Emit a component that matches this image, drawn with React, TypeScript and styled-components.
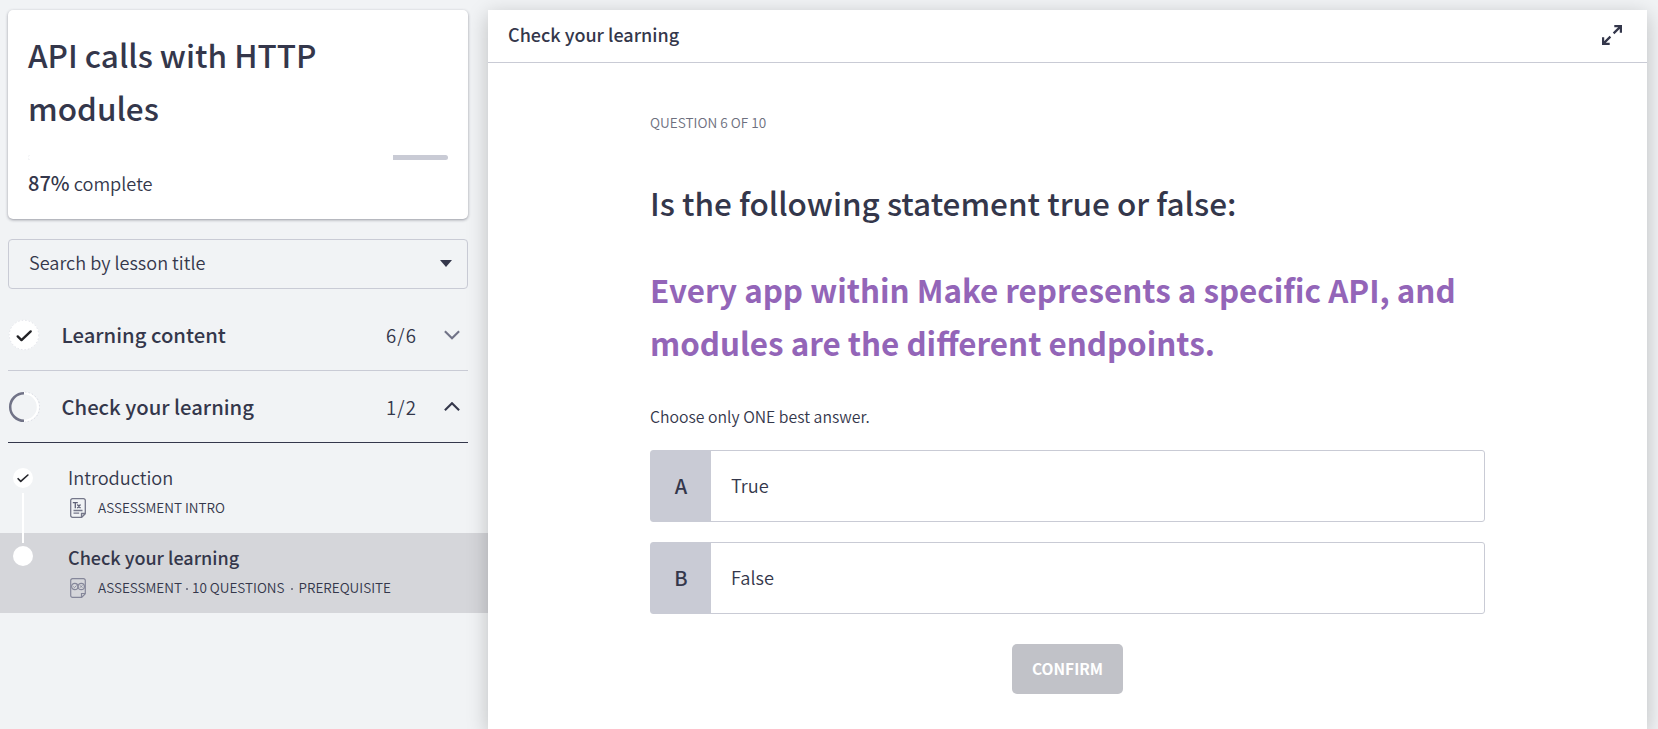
import React from "react";
import styled, { createGlobalStyle } from "styled-components";

const ink = "#34374b";
const line = "#c9cbd5";

const GlobalStyle = createGlobalStyle`
  *, *::before, *::after { box-sizing: border-box; }
  body {
    margin: 0;
    background: #f1f3f5;
    color: ${ink};
    font-family: "Noto Sans CJK SC", "Noto Sans", sans-serif;
    font-size: 18.2px;
    font-weight: 350;
    overflow: hidden;
  }
  h1, h2, p, ul { margin: 0; padding: 0; font-weight: inherit; }
  button { font-family: inherit; font-weight: inherit; color: inherit; border: 0; cursor: pointer; }
`;

const Page = styled.div`
  display: flex;
  height: 100vh;
  padding: 10px 11px 0 0;
`;

const Sidebar = styled.aside`
  width: 488px;
  flex: none;
`;

const CourseCard = styled.section`
  height: 209px;
  margin: 0 20px 20px 8px;
  padding: 18px 20px 20px;
  background: #fff;
  border-radius: 5px;
  box-shadow: 0 1px 3px rgba(40, 42, 60, 0.45);
`;

const CourseTitle = styled.h1`
  font-size: 31.5px;
  font-weight: 500;
  line-height: 53px;
`;

const ProgressTrack = styled.div`
  display: flex;
  width: 420px;
  height: 5px;
  margin-top: 21px;
  border-radius: 3px;
  background: ${line};
  overflow: hidden;
`;

const ProgressFill = styled.div`
  background: #fff;
`;

const ProgressText = styled.p`
  margin-top: 7px;
  line-height: 32px;

  strong {
    font-size: 20px;
    font-weight: 500;
  }
`;

const SearchBox = styled.button`
  display: flex;
  align-items: center;
  justify-content: space-between;
  width: 460px;
  height: 50px;
  margin: 0 0 10px 8px;
  padding: 0 15px 1px 20px;
  background: transparent;
  border: 1px solid ${line};
  border-radius: 4px;
  font-size: 18.1px;
`;

const SearchLabel = styled.span`
  padding-bottom: 4px;
`;

const SectionRow = styled.div<{ $open?: boolean }>`
  display: flex;
  align-items: center;
  height: 72px;
  margin: 0 20px 0 8px;
  border-bottom: 1px solid ${(p) => (p.$open ? ink : line)};
`;

const SectionTitle = styled.h2`
  flex: 1;
  margin-left: 21.5px;
  font-size: 20.25px;
  font-weight: 500;
  line-height: 30px;
`;

const SectionCount = styled.span`
  width: 58px;
  font-size: 18.6px;
  letter-spacing: 1.1px;
`;

const ChevronSlot = styled.span`
  display: flex;
  width: 16px;
  margin: 1px 8px 0 0;
`;

const LessonList = styled.ul`
  list-style: none;
  padding-top: 10px;
`;

const Lesson = styled.li<{ $active?: boolean }>`
  position: relative;
  display: flex;
  height: 80px;
  background: ${(p) => (p.$active ? "#d5d6da" : "transparent")};
`;

const LessonMarker = styled.span<{ $active?: boolean }>`
  display: flex;
  align-items: center;
  justify-content: center;
  flex: none;
  width: 20px;
  height: 20px;
  margin: ${(p) => (p.$active ? "13px" : "15px")} 0 0 13px;
  border-radius: 50%;
  background: #fff;
`;

const Connector = styled.span`
  position: absolute;
  z-index: 1;
  left: 22px;
  top: 40px;
  width: 2px;
  height: 50px;
  background: #fff;
`;

const LessonBody = styled.div`
  margin-left: 35px;
  padding-top: 10px;
`;

const LessonTitle = styled.p<{ $active?: boolean }>`
  font-weight: ${(p) => (p.$active ? 500 : 350)};
  font-size: ${(p) => (p.$active ? 18 : 18.2)}px;
  line-height: 28px;
`;

const LessonMeta = styled.p`
  display: flex;
  align-items: center;
  height: 20px;
  margin-top: 6px;
  padding-left: 2px;
  font-size: 13.5px;
  line-height: 20px;
  white-space: pre;

  svg { margin: 1px 12px 0 0; flex: none; }
`;

const Dot = styled.span<{ $wide?: boolean }>`
  width: 2px;
  height: 2px;
  margin: 3px ${(p) => (p.$wide ? 6 : 4)}px 0;
  border-radius: 1px;
  background: #5d5f73;
`;

const Panel = styled.main`
  position: relative;
  z-index: 2;
  flex: 1;
  background: #fff;
  box-shadow: 0 5px 20px rgba(0, 0, 0, 0.22);
`;

const PanelHeader = styled.header`
  display: flex;
  align-items: center;
  justify-content: space-between;
  height: 53px;
  padding: 0 25px 3px 20px;
  border-bottom: 1px solid ${line};
  font-size: 18px;
  font-weight: 500;
`;

const PanelTitle = styled.span`
  padding-bottom: 2px;
`;

const Question = styled.section`
  display: flex;
  flex-direction: column;
  width: 835px;
  margin: 0 auto;
  padding-top: 49px;
`;

const QuestionCount = styled.p`
  font-size: 13.6px;
  line-height: 20px;
  color: #6d6f7e;
`;

const QuestionText = styled.h1`
  margin-top: 44px;
  font-size: 31.5px;
  font-weight: 500;
  line-height: 53px;
`;

const Statement = styled.p`
  margin-top: 34px;
  font-size: 31.35px;
  font-weight: 700;
  line-height: 53px;
  color: #9365b8;
`;

const Hint = styled.p`
  margin-top: 34px;
  font-size: 15.8px;
  line-height: 28px;
`;

const Option = styled.button`
  display: flex;
  height: 72px;
  margin-top: 19px;
  padding: 0;
  background: #fff;
  border: 1px solid ${line};
  border-radius: 3px;
  font-size: 18.2px;

  & + & { margin-top: 20px; }
`;

const OptionKey = styled.span`
  display: flex;
  align-items: center;
  justify-content: center;
  width: 60px;
  height: 100%;
  padding-bottom: 1px;
  background: ${line};
  font-size: 20px;
  font-weight: 500;
`;

const OptionLabel = styled.span`
  padding-left: 20px;
  line-height: 69px;
`;

const ConfirmButton = styled.button`
  width: 111px;
  height: 50px;
  margin-top: 30px;
  align-self: center;
  padding: 0 0 2px;
  background: #c1c2c8;
  border-radius: 5px;
  color: #fff;
  font-size: 15.5px;
  font-weight: 700;
`;

const CheckIcon = ({ size }: { size: number }) => (
  <svg width={size} height={size} viewBox="0 0 16 16" fill="none">
    <path d="M1.5 9 5 12.6 14.5 4" stroke="#26262c" strokeWidth="2.2" strokeLinecap="round" strokeLinejoin="round" />
  </svg>
);

const DoneBadge = () => (
  <svg width="32" height="32" viewBox="0 0 32 32" fill="none">
    <circle cx="16" cy="16" r="15" fill="#fff" />
    <circle cx="16" cy="16" r="14.7" stroke="#c9cbd6" strokeWidth=".5" strokeDasharray="1.5 2" />
    <path d="M9.7 17.4 13.5 21.1 22.7 12.4" stroke="#222226" strokeWidth="2.4" strokeLinecap="round" strokeLinejoin="round" />
  </svg>
);

const HalfBadge = () => (
  <svg width="32" height="32" viewBox="0 0 32 32" fill="none">
    <path d="M16 2.1a13.9 13.9 0 0 1 0 27.8" stroke="#fff" strokeWidth="2.2" />
    <path d="M17 1.2a14.8 14.8 0 0 1 0 29.6" stroke="#c9cbd6" strokeWidth=".6" strokeDasharray="1.5 2" />
    <path d="M16 2.2a13.8 13.8 0 0 0 0 27.6" stroke="#717387" strokeWidth="2.5" />
  </svg>
);

const Chevron = ({ up }: { up?: boolean }) => (
  <svg width="16" height="10" viewBox="0 0 16 10" fill="none">
    <path d={up ? "M.9 8.3 8 1.2l7.1 7.1" : "M.9 1.2 8 8.3l7.1-7.1"} stroke={up ? ink : "#717387"} strokeWidth="2.1" />
  </svg>
);

const sheet = "M2.5.7h11A1.8 1.8 0 0 1 15.3 2.5v13.2l-3.6 3.6H2.5A1.8 1.8 0 0 1 .7 17.5V2.5A1.8 1.8 0 0 1 2.5.7ZM11.5 19v-3.5h3.6";

const TextSheetIcon = () => (
  <svg width="16" height="20" viewBox="0 0 16 20" fill="none" stroke="#75778a" strokeWidth="1.3">
    <path d={sheet} />
    <path d="M2.8 4.7h5M5.300 4.7v5.5M7.300 6.500l3.200 3.600M10.500 6.500l-3.200 3.600" stroke="#5f6177" />
    <path d="M3.5 12.5h9M3.5 15.1h5.7" />
  </svg>
);

const QuizSheetIcon = () => (
  <svg width="16" height="20" viewBox="0 0 16 20" fill="none" stroke="#85879a" strokeWidth="1.2">
    <path d={sheet} />
    <circle cx="4.8" cy="8.5" r="3.2" />
    <circle cx="11.2" cy="8.5" r="3.2" />
    <path d="m3.3 8.5 1.2 1.2 2-2.200M10 7.300l2.400 2.400M12.400 7.300 10 9.700" strokeWidth=".9" />
  </svg>
);

const ExpandIcon = () => (
  <svg width="20" height="20" viewBox="0 0 20 20" fill="none" stroke={ink} strokeWidth="2.2">
    <path d="M12.3 1.1h6.600v6.600M18.900 1.1l-7.300 7.300M7.700 18.900H1.100v-6.600M1.100 18.900l7.300-7.300" />
  </svg>
);

const percent = 87;
const options = [
  { id: "A", label: "True" },
  { id: "B", label: "False" },
];

export default function App() {
  return (
    <>
      <GlobalStyle />
      <Page>
        <Sidebar>
          <CourseCard>
            <CourseTitle>API calls with HTTP modules</CourseTitle>
            <ProgressTrack>
              <ProgressFill style={{ width: `${percent}%` }} />
            </ProgressTrack>
            <ProgressText>
              <strong>{percent}%</strong> complete
            </ProgressText>
          </CourseCard>
          <SearchBox>
            <SearchLabel>Search by lesson title</SearchLabel>
            <svg width="12" height="7" viewBox="0 0 12 7">
              <path d="M0 0h12L6 7z" fill={ink} />
            </svg>
          </SearchBox>
          <SectionRow>
            <DoneBadge />
            <SectionTitle>Learning content</SectionTitle>
            <SectionCount>6/6</SectionCount>
            <ChevronSlot>
              <Chevron />
            </ChevronSlot>
          </SectionRow>
          <SectionRow $open>
            <HalfBadge />
            <SectionTitle>Check your learning</SectionTitle>
            <SectionCount>1/2</SectionCount>
            <ChevronSlot>
              <Chevron up />
            </ChevronSlot>
          </SectionRow>
          <LessonList>
            <Lesson>
              <LessonMarker>
                <CheckIcon size={12} />
              </LessonMarker>
              <Connector />
              <LessonBody>
                <LessonTitle>Introduction</LessonTitle>
                <LessonMeta>
                  <TextSheetIcon />
                  ASSESSMENT INTRO
                </LessonMeta>
              </LessonBody>
            </Lesson>
            <Lesson $active>
              <LessonMarker $active />
              <LessonBody>
                <LessonTitle $active>Check your learning</LessonTitle>
                <LessonMeta>
                  <QuizSheetIcon />
                  <span>ASSESSMENT</span>
                  <Dot />
                  <span>10 QUESTIONS</span>
                  <Dot $wide />
                  <span>PREREQUISITE</span>
                </LessonMeta>
              </LessonBody>
            </Lesson>
          </LessonList>
        </Sidebar>
        <Panel>
          <PanelHeader>
            <PanelTitle>Check your learning</PanelTitle>
            <ExpandIcon />
          </PanelHeader>
          <Question>
            <QuestionCount>QUESTION 6 OF 10</QuestionCount>
            <QuestionText>Is the following statement true or false:</QuestionText>
            <Statement>
              Every app within Make represents a specific API, and modules are the different endpoints.
            </Statement>
            <Hint>Choose only ONE best answer.</Hint>
            {options.map((o) => (
              <Option key={o.id}>
                <OptionKey>{o.id}</OptionKey>
                <OptionLabel>{o.label}</OptionLabel>
              </Option>
            ))}
            <ConfirmButton>CONFIRM</ConfirmButton>
          </Question>
        </Panel>
      </Page>
    </>
  );
}
